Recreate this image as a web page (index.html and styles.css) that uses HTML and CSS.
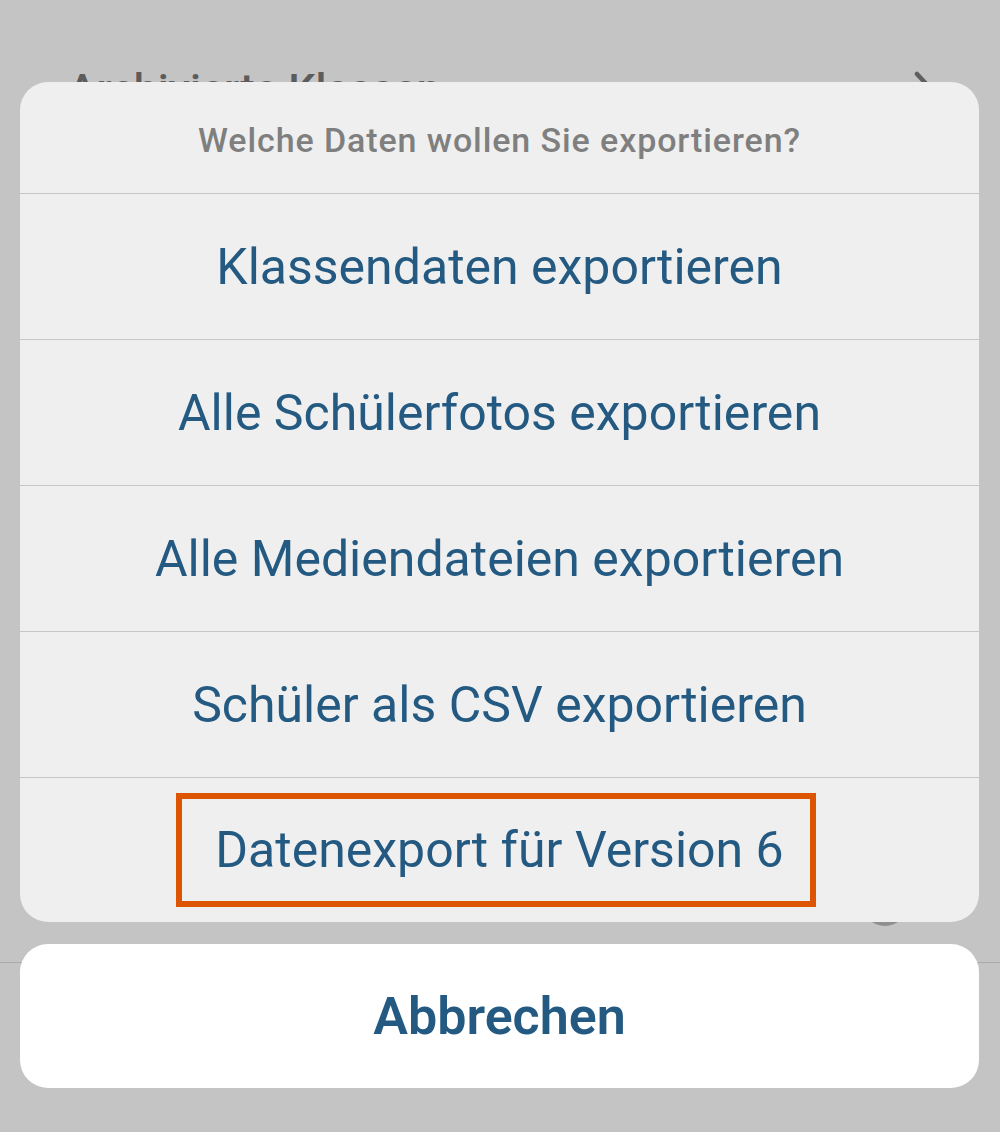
FILE: index.html
```html
<!DOCTYPE html>
<html lang="de">
<head>
<meta charset="utf-8">
<title>Export</title>
<link rel="stylesheet" href="styles.css">
</head>
<body>
<div class="screen">
  <div class="bg-row">
    <span class="bg-label">Archivierte Klassen</span>
    <svg class="bg-chevron" width="20" height="34" viewBox="0 0 20 34"><path d="M3 3 L16 17 L3 31" fill="none" stroke="#5f5f5f" stroke-width="4.5" stroke-linecap="round" stroke-linejoin="round"/></svg>
  </div>
  <div class="bg-line"></div>
  <div class="bg-circle"></div>

  <div class="sheet-wrap">
    <div class="sheet">
      <div class="sheet-title">Welche Daten wollen Sie exportieren?</div>
      <div class="sheet-item">Klassendaten exportieren</div>
      <div class="sheet-item">Alle Schülerfotos exportieren</div>
      <div class="sheet-item">Alle Mediendateien exportieren</div>
      <div class="sheet-item">Schüler als CSV exportieren</div>
      <div class="sheet-item last"><span class="highlight">Datenexport für Version 6</span></div>
    </div>
    <div class="cancel">Abbrechen</div>
  </div>
</div>
</body>
</html>
```

FILE: styles.css
```css
html, body {
  margin: 0;
  padding: 0;
}
body {
  width: 1000px;
  height: 1132px;
  background: #c4c4c4;
  font-family: Roboto, "Noto Sans", "Liberation Sans", sans-serif;
  overflow: hidden;
}
.screen {
  position: relative;
  width: 1000px;
  height: 1132px;
}
.bg-row {
  position: absolute;
  left: 68px;
  right: 66px;
  top: 62px;
  height: 54px;
  display: flex;
  align-items: flex-start;
  justify-content: space-between;
}
.bg-label {
  font-size: 43px;
  line-height: 54px;
  color: #5c5c5c;
  font-weight: 500;
}
.bg-chevron {
  display: block;
  margin-top: 9px;
}
.bg-line {
  position: absolute;
  left: 0;
  right: 0;
  top: 962px;
  height: 1px;
  background: #a9a9a9;
}
.bg-circle {
  position: absolute;
  left: 862px;
  top: 880px;
  width: 46px;
  height: 46px;
  border-radius: 50%;
  background: #8f8f8f;
}
.sheet-wrap {
  position: absolute;
  left: 20px;
  right: 21px;
  top: 82px;
  display: flex;
  flex-direction: column;
  gap: 22px;
}
.sheet {
  background: #efefef;
  border-radius: 28px;
  overflow: hidden;
  display: flex;
  flex-direction: column;
}
.sheet-title {
  height: 112px;
  display: flex;
  align-items: center;
  justify-content: center;
  font-size: 34px;
  font-weight: 500;
  letter-spacing: 0.9px;
  color: #7f7f7f;
  border-bottom: 1px solid #c6c6c6;
  box-sizing: border-box;
  padding-top: 4px;
}
.sheet-item {
  height: 146px;
  display: flex;
  align-items: center;
  justify-content: center;
  font-size: 50px;
  color: #245a82;
  border-bottom: 1px solid #c6c6c6;
  box-sizing: border-box;
}
.sheet-item.last {
  border-bottom: none;
  height: 144px;
}
.highlight {
  width: 640px;
  height: 114px;
  box-sizing: border-box;
  border: 6px solid #dd5500;
  display: flex;
  align-items: center;
  justify-content: center;
  margin-right: 7px;
  padding-left: 7px;
}
.cancel {
  background: #ffffff;
  border-radius: 28px;
  height: 144px;
  display: flex;
  align-items: center;
  justify-content: center;
  font-size: 52px;
  font-weight: 600;
  color: #245a82;
}
```
